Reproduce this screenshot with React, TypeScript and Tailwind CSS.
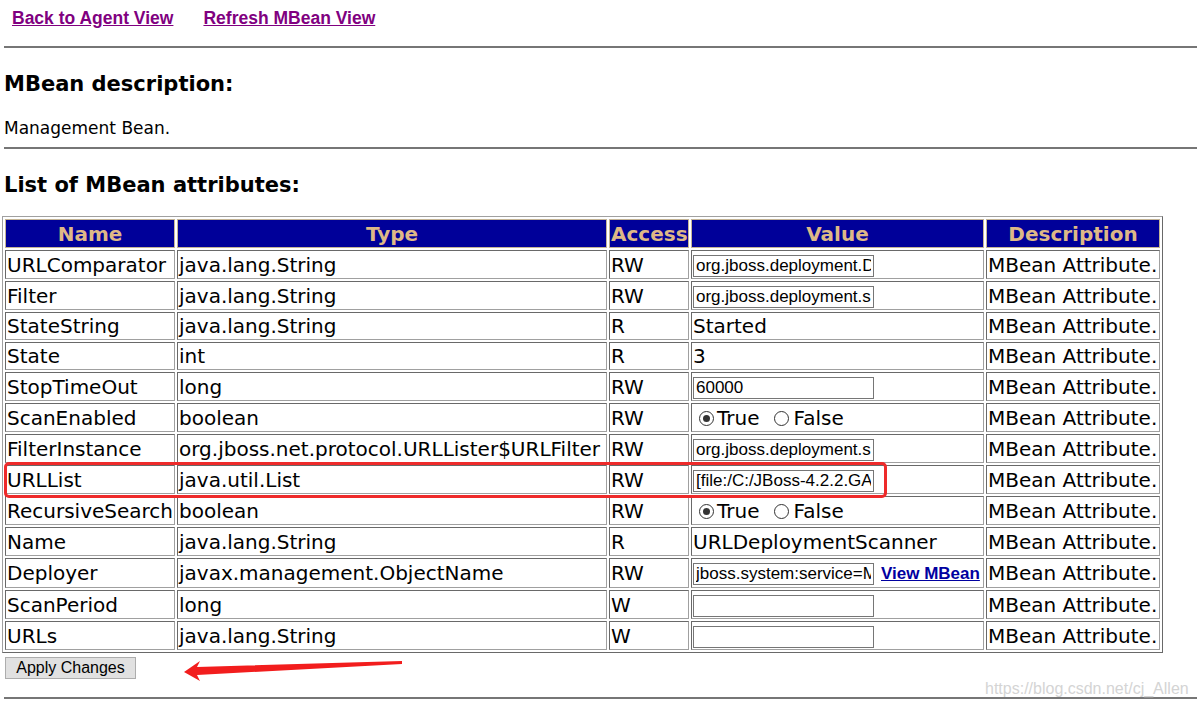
import React from 'react';

type Cell =
  | { kind: 'text'; v: string }
  | { kind: 'input'; v: string }
  | { kind: 'radio'; on: boolean }
  | { kind: 'link'; v: string };

type Row = { name: string; type: string; access: string; value: Cell; h: string };

const rows: Row[] = [
  { name: 'URLComparator', type: 'java.lang.String', access: 'RW', value: { kind: 'input', v: 'org.jboss.deployment.DeploymentSorter' }, h: 'h-[29px]' },
  { name: 'Filter', type: 'java.lang.String', access: 'RW', value: { kind: 'input', v: 'org.jboss.deployment.scanner.DeploymentFilter' }, h: 'h-[29px]' },
  { name: 'StateString', type: 'java.lang.String', access: 'R', value: { kind: 'text', v: 'Started' }, h: 'h-[28px]' },
  { name: 'State', type: 'int', access: 'R', value: { kind: 'text', v: '3' }, h: 'h-[28px]' },
  { name: 'StopTimeOut', type: 'long', access: 'RW', value: { kind: 'input', v: '60000' }, h: 'h-[29px]' },
  { name: 'ScanEnabled', type: 'boolean', access: 'RW', value: { kind: 'radio', on: true }, h: 'h-[29px]' },
  { name: 'FilterInstance', type: 'org.jboss.net.protocol.URLLister$URLFilter', access: 'RW', value: { kind: 'input', v: 'org.jboss.deployment.scanner.DeploymentFilter@1a2b3c' }, h: 'h-[29px]' },
  { name: 'URLList', type: 'java.util.List', access: 'RW', value: { kind: 'input', v: '[file:/C:/JBoss-4.2.2.GA/server/default/deploy/]' }, h: 'h-[29px]' },
  { name: 'RecursiveSearch', type: 'boolean', access: 'RW', value: { kind: 'radio', on: true }, h: 'h-[29px]' },
  { name: 'Name', type: 'java.lang.String', access: 'R', value: { kind: 'text', v: 'URLDeploymentScanner' }, h: 'h-[29px]' },
  { name: 'Deployer', type: 'javax.management.ObjectName', access: 'RW', value: { kind: 'link', v: 'jboss.system:service=MainDeployer' }, h: 'h-[29px]' },
  { name: 'ScanPeriod', type: 'long', access: 'W', value: { kind: 'input', v: '' }, h: 'h-[29px]' },
  { name: 'URLs', type: 'java.lang.String', access: 'W', value: { kind: 'input', v: '' }, h: 'h-[29px]' },
];

const td =
  'p-px border border-t-[#696969] border-l-[#696969] border-b-[#a0a0a0] border-r-[#a0a0a0] whitespace-nowrap overflow-hidden';
const th =
  'p-px border border-[#c4b596] bg-[#000099] text-[#deb887] font-bold text-center whitespace-nowrap';

const Field = ({ v }: { v: string }) => (
  <input
    readOnly
    defaultValue={v}
    className="align-middle w-[181px] h-[22px] px-[2px] border border-[#767676] bg-white text-black text-[17px] outline-none"
    style={{ fontFamily: '"Liberation Sans", Arial, sans-serif' }}
  />
);

const Radio = ({ on }: { on: boolean }) => (
  <span className="inline-block w-[15px] h-[15px] rounded-full border border-[#333] bg-white align-[-1px] relative">
    {on && <span className="absolute left-[3px] top-[3px] w-[7px] h-[7px] rounded-full bg-[#333]" />}
  </span>
);

const ValueCell = ({ c }: { c: Cell }) => {
  if (c.kind === 'text') return <>{c.v}</>;
  if (c.kind === 'input') return <Field v={c.v} />;
  if (c.kind === 'radio')
    return (
      <span className="inline-flex items-center">
        <span className="ml-[6px]"><Radio on={c.on} /></span>
        <span className="ml-[3px]">True</span>
        <span className="ml-[15px]"><Radio on={!c.on} /></span>
        <span className="ml-[4px]">False</span>
      </span>
    );
  return (
    <span className="inline-flex items-center">
      <Field v={c.v} />
      <a
        href="#"
        className="ml-[7px] text-[17px] font-bold text-[#0000a0] underline"
        style={{ fontFamily: '"Liberation Sans", Arial, sans-serif' }}
      >
        View MBean
      </a>
    </span>
  );
};

const Rule = ({ className }: { className: string }) => (
  <div className={`ml-[4px] h-[2px] bg-[#767676] ${className}`} />
);

const App: React.FC = () => {
  return (
    <div
      className="relative w-[1197px] h-[707px] overflow-hidden bg-white text-black"
      style={{ fontFamily: '"DejaVu Sans", Verdana, sans-serif' }}
    >
      {/* top links */}
      <div
        className="flex gap-[30px] pl-[12px] pt-[8px] leading-[20px] text-[17.5px] font-bold"
        style={{ fontFamily: '"Liberation Sans", Arial, sans-serif' }}
      >
        <a href="#" className="text-[#800080] underline">Back to Agent View</a>
        <a href="#" className="text-[#800080] underline">Refresh MBean View</a>
      </div>

      <Rule className="mt-[18px]" />

      <h3 className="ml-[4px] mt-[23px] text-[21px] leading-[26px] font-bold">MBean description:</h3>
      <p className="ml-[4px] mt-[21px] text-[17px] leading-[20px]">Management Bean.</p>

      <Rule className="mt-[9px]" />

      <h3 className="ml-[4px] mt-[23px] text-[21px] leading-[26px] font-bold">List of MBean attributes:</h3>

      {/* attribute table */}
      <table className="ml-[2px] mt-[18px] w-[1161px] table-fixed border-separate border-spacing-[2px] border border-t-[#a0a0a0] border-l-[#a0a0a0] border-b-[#696969] border-r-[#696969] text-[20px] leading-[24px]">
        <colgroup>
          <col className="w-[170px]" />
          <col className="w-[430px]" />
          <col className="w-[80px]" />
          <col className="w-[293px]" />
          <col className="w-[174px]" />
        </colgroup>
        <thead>
          <tr className="h-[29px]">
            <th className={th}>Name</th>
            <th className={th}>Type</th>
            <th className={th}>Access</th>
            <th className={th}>Value</th>
            <th className={th}>Description</th>
          </tr>
        </thead>
        <tbody>
          {rows.map((r) => (
            <tr key={r.name} className={r.h}>
              <td className={td}>{r.name}</td>
              <td className={td}>{r.type}</td>
              <td className={td}>{r.access}</td>
              <td className={td}>
                <ValueCell c={r.value} />
              </td>
              <td className={td}>MBean Attribute.</td>
            </tr>
          ))}
        </tbody>
      </table>

      <button
        className="ml-[5px] mt-[4px] w-[131px] h-[22px] bg-[#e1e1e1] border border-[#adadad] text-[16px] leading-[20px] text-black"
        style={{ fontFamily: '"Liberation Sans", Arial, sans-serif' }}
      >
        Apply Changes
      </button>

      <Rule className="mt-[17px]" />

      {/* red annotations */}
      <div className="absolute left-[4px] top-[462px] w-[883px] h-[36px] border-[3px] border-[#ee2a2a] rounded-[5px] pointer-events-none" />
      <svg className="absolute left-0 top-[650px] pointer-events-none" width="420" height="40" viewBox="0 0 420 40">
        <polygon points="184,22 200,11 197,17 402,11 402,14 197,25 200,31" fill="#f21d1d" />
      </svg>

      {/* watermark */}
      <div
        className="absolute left-[985px] top-[679px] text-[16px] leading-[20px] text-[#d4d4d4]"
        style={{ fontFamily: '"Liberation Sans", Arial, sans-serif' }}
      >
        https://blog.csdn.net/cj_Allen
      </div>
    </div>
  );
};

export default App;
